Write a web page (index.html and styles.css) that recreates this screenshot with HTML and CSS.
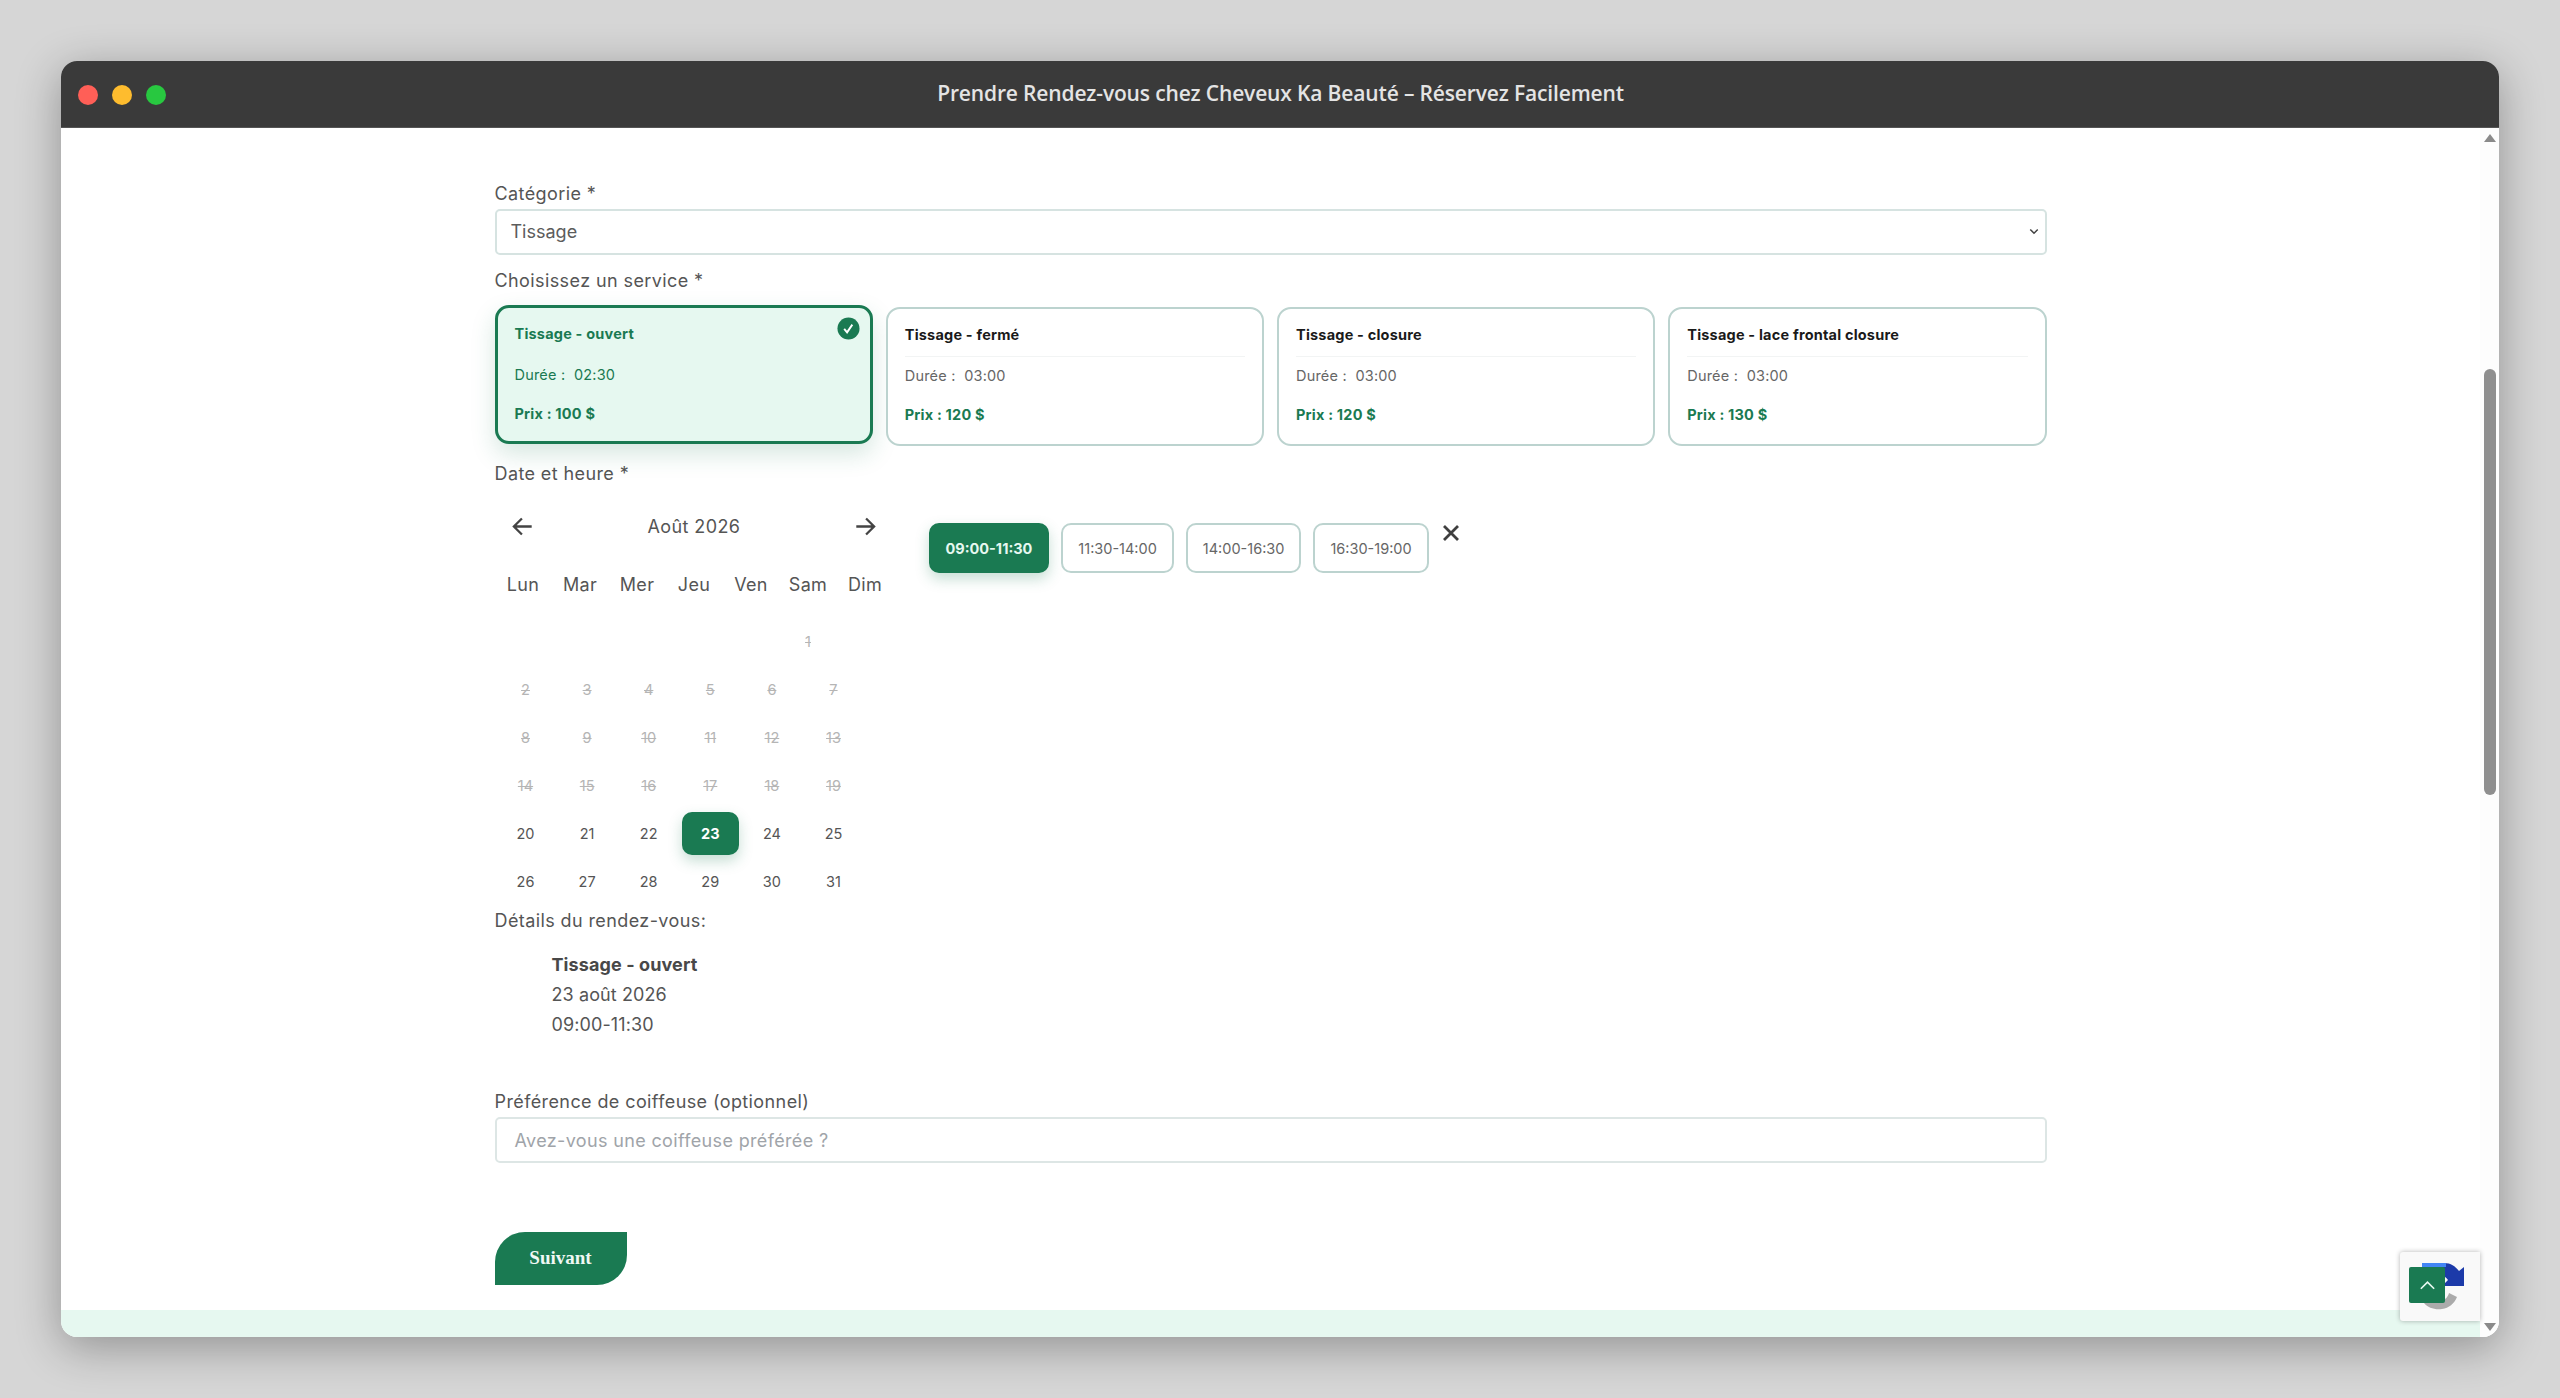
FILE: index.html
```html
<!DOCTYPE html>
<html lang="fr">
<head>
    <meta charset="utf-8" />
    <meta name="viewport" content="width=device-width, initial-scale=1.0" />
    <title>Prendre Rendez-vous chez Cheveux Ka Beauté</title>
    <link rel="stylesheet" href="styles.css">
</head>
<body>
    <div class="window">
        <header class="titlebar">
            <div class="lights">
                <span class="light red"></span>
                <span class="light yellow"></span>
                <span class="light green"></span>
            </div>
            <div class="window-title">Prendre Rendez-vous chez Cheveux Ka Beauté – Réservez Facilement</div>
        </header>

        <div class="viewport">
            <div class="page">
                <main class="booking">
                    <form class="booking-form">
                        <label class="field-label label-category">Catégorie *</label>
                        <div class="select-box">
                            <span>Tissage</span>
                            <svg class="select-caret" viewBox="0 0 12 8" width="10" height="7"><path d="M1.5 1.5 6 6l4.5-4.5" fill="none" stroke="#444" stroke-width="1.8"/></svg>
                        </div>

                        <label class="field-label label-service">Choisissez un service *</label>
                        <div class="service-grid">
                            <div class="service-card selected">
                                <svg class="card-check" viewBox="0 0 24 24" width="23" height="23"><circle cx="12" cy="12" r="11.5" fill="#1a7a52"/><path d="M7.500 12.500l3 3.500 5.500-8" fill="none" stroke="#fff" stroke-width="2"/></svg>
                                <div class="service-name">Tissage - ouvert</div>
                                <div class="service-time">Durée :&nbsp; 02:30</div>
                                <div class="service-price">Prix : 100 $</div>
                            </div>
                            <div class="service-card">
                                <div class="service-name">Tissage - fermé</div>
                                <div class="service-time">Durée :&nbsp; 03:00</div>
                                <div class="service-price">Prix : 120 $</div>
                            </div>
                            <div class="service-card">
                                <div class="service-name">Tissage - closure</div>
                                <div class="service-time">Durée :&nbsp; 03:00</div>
                                <div class="service-price">Prix : 120 $</div>
                            </div>
                            <div class="service-card">
                                <div class="service-name">Tissage - lace frontal closure</div>
                                <div class="service-time">Durée :&nbsp; 03:00</div>
                                <div class="service-price">Prix : 130 $</div>
                            </div>
                        </div>

                        <label class="field-label label-date">Date et heure *</label>
                        <div class="date-time">
                            <div class="calendar">
                                <div class="cal-nav">
                                    <svg viewBox="0 0 20 20" width="23" height="23"><path d="M18 10H2.500M9.500 3 2.500 10l7 7" fill="none" stroke="#444" stroke-width="2"/></svg>
                                    <span class="cal-month">Août 2026</span>
                                    <svg viewBox="0 0 20 20" width="23" height="23"><path d="M2 10h15.500M10.500 3l7 7-7 7" fill="none" stroke="#444" stroke-width="2"/></svg>
                                </div>
                                <div class="cal-weekdays">
                                    <span>Lun</span><span>Mar</span><span>Mer</span><span>Jeu</span><span>Ven</span><span>Sam</span><span>Dim</span>
                                </div>
                                <div class="cal-first">
                                    <span></span><span></span><span></span><span></span><span></span>
                                    <span class="day off">1</span>
                                </div>
                                <div class="cal-week">
                                    <span class="day off">2</span><span class="day off">3</span><span class="day off">4</span><span class="day off">5</span><span class="day off">6</span><span class="day off">7</span>
                                </div>
                                <div class="cal-week">
                                    <span class="day off">8</span><span class="day off">9</span><span class="day off">10</span><span class="day off">11</span><span class="day off">12</span><span class="day off">13</span>
                                </div>
                                <div class="cal-week">
                                    <span class="day off">14</span><span class="day off">15</span><span class="day off">16</span><span class="day off">17</span><span class="day off">18</span><span class="day off">19</span>
                                </div>
                                <div class="cal-week">
                                    <span class="day">20</span><span class="day">21</span><span class="day">22</span><span class="day active">23</span><span class="day">24</span><span class="day">25</span>
                                </div>
                                <div class="cal-week">
                                    <span class="day">26</span><span class="day">27</span><span class="day">28</span><span class="day">29</span><span class="day">30</span><span class="day">31</span>
                                </div>
                            </div>

                            <div class="slots">
                                <div class="slot active">09:00-11:30</div>
                                <div class="slot">11:30-14:00</div>
                                <div class="slot">14:00-16:30</div>
                                <div class="slot">16:30-19:00</div>
                                <svg class="slots-close" viewBox="0 0 18 18" width="18" height="18"><path d="M2 2l14 14M16 2 2 16" fill="none" stroke="#3f3f3f" stroke-width="2.800"/></svg>
                            </div>
                        </div>

                        <label class="field-label label-details">Détails du rendez-vous:</label>
                        <div class="details">
                            <strong>Tissage - ouvert</strong>
                            <div>23 août 2026</div>
                            <div>09:00-11:30</div>
                        </div>

                        <label class="field-label label-pref">Préférence de coiffeuse (optionnel)</label>
                        <div class="text-box">Avez-vous une coiffeuse préférée ?</div>

                        <button type="button" class="next-btn">Suivant</button>
                    </form>
                </main>
                <div class="page-footer"></div>
            </div>

            <div class="scrollbar">
                <svg viewBox="0 0 12 8" width="12" height="8"><path d="M6 0l6 8H0z" fill="#8a8a8a"/></svg>
                <div class="scroll-track"><div class="scroll-thumb"></div></div>
                <svg viewBox="0 0 12 8" width="12" height="8"><path d="M0 0h12L6 8z" fill="#8a8a8a"/></svg>
            </div>

            <div class="recaptcha">
                <svg class="recaptcha-logo" viewBox="0 0 46 50" width="46" height="50">
                    <path d="M16 2h8c7 0 11 3 15 8l5-4v19H22l6-6c-3-4-6-6-12-6z" fill="#1c3aa9"/>
                    <path d="M2 2h24v4H2z" fill="#4285f4"/>
                    <path d="M4 42c4 5 11 7 18 6 7-1 12-5 15-12l-8-4c-1 4-4 7-8 8-4 1-8 1-11-1z" fill="#ababab"/>
                </svg>
            </div>
            <div class="back-top">
                <svg viewBox="0 0 20 12" width="17" height="10"><path d="M2 10.500 10 2.500l8 8" fill="none" stroke="#e6f8f0" stroke-width="2"/></svg>
            </div>
        </div>
    </div>
</body>
</html>
```

FILE: styles.css
```css
* {
    box-sizing: border-box;
}

html, body {
    height: 100%;
}

body {
    margin: 0;
    padding: 61px;
    background: #d6d6d6;
    font-family: 'Inter', 'Liberation Sans', sans-serif;
    color: #4a4a4a;
    overflow: hidden;
}

.window {
    display: flex;
    flex-direction: column;
    height: 1276px;
    border-radius: 16px;
    overflow: hidden;
    background: #fff;
    box-shadow: 0 10px 45px rgba(0,0,0,0.32);
}

.titlebar {
    position: relative;
    flex: 0 0 67px;
    display: flex;
    align-items: center;
    justify-content: center;
    background: #3a3a3a;
    border-bottom: 1px solid #555;
}

.lights {
    position: absolute;
    left: 17px;
    top: 24px;
    display: flex;
    gap: 14px;
}

.light {
    width: 20px;
    height: 20px;
    border-radius: 50%;
}

.light.red { background: #ff5f57; }
.light.yellow { background: #febc2e; }
.light.green { background: #28c840; }

.window-title {
    color: #e4e4e4;
    font-family: 'Open Sans', sans-serif;
    font-size: 21px;
    font-weight: 600;
    letter-spacing: -0.15px;
    margin-top: -3px;
    margin-left: 1px;
}

.viewport {
    position: relative;
    flex: 1;
    display: flex;
    min-height: 0;
}

.page {
    flex: 1;
    display: flex;
    flex-direction: column;
}

.booking {
    flex: 1;
    display: flex;
    justify-content: center;
}

.booking-form {
    width: 1552px;
    padding-top: 53px;
}

.field-label {
    display: block;
    font-size: 18px;
    line-height: 26px;
    letter-spacing: 0.4px;
    color: #555;
}

.label-service { margin-top: 13px; }
.label-date { margin-top: 15px; }
.label-details { margin-top: 5px; }
.label-pref { margin-top: 49px; }

.select-box {
    display: flex;
    align-items: center;
    justify-content: space-between;
    height: 46px;
    margin-top: 2px;
    padding: 0 6px 1px 14px;
    border: 2px solid #d6e3e1;
    border-radius: 5px;
    font-size: 18px;
    color: #5c5c5c;
}

.service-grid {
    display: grid;
    grid-template-columns: repeat(4, 1fr);
    gap: 13px;
    margin-top: 13px;
}

.service-card {
    position: relative;
    height: 139px;
    padding: 16px 17px 0;
    background: #fff;
    border: 2px solid #bcd3cf;
    border-radius: 14px;
    font-size: 14.5px;
    letter-spacing: 0.2px;
}

.service-card.selected {
    transform: translateY(-2px);
    background: #e6f8f0;
    border: 3px solid #1a7a52;
    color: #1a7a52;
    box-shadow: 0 10px 24px rgba(26,122,82,0.18);
}

.service-name {
    height: 32px;
    line-height: 20px;
    font-weight: 700;
    color: #1a1a1a;
    border-bottom: 1px solid #f2f4f4;
}

.service-time {
    margin-top: 9px;
    line-height: 20px;
    color: #666;
}

.service-price {
    margin-top: 19px;
    line-height: 20px;
    font-weight: 700;
    color: #1a7a52;
}

.selected .service-name,
.selected .service-time,
.selected .service-price {
    color: #1a7a52;
    border-color: transparent;
}

.card-check {
    position: absolute;
    top: 9px;
    right: 10px;
}

.date-time {
    display: flex;
    margin-top: 11px;
}

.calendar {
    flex: 0 0 434px;
    padding-top: 8px;
}

.cal-nav {
    display: flex;
    align-items: center;
    justify-content: space-between;
    width: 367px;
    height: 40px;
    margin-left: 16px;
}

.cal-month {
    font-size: 18px;
    letter-spacing: 0.4px;
    color: #555;
}

.cal-weekdays,
.cal-first {
    display: grid;
    grid-template-columns: repeat(7, 57px);
}

.cal-weekdays {
    margin-top: 26px;
    height: 26px;
    line-height: 26px;
    text-align: center;
    font-size: 18px;
    letter-spacing: 0.3px;
    color: #555;
}

.cal-first {
    height: 43px;
    margin-top: 22px;
    grid-template-columns: repeat(6, 57px);
}

.cal-week {
    display: grid;
    grid-template-columns: repeat(6, 57px);
    column-gap: 4.6px;
    height: 43px;
    margin-top: 5px;
    margin-left: 2.500px;
}

.day {
    display: flex;
    align-items: center;
    justify-content: center;
    height: 43px;
    font-size: 14.5px;
    color: #555;
    border-radius: 10px;
}

.day.off {
    color: #b5b5b5;
    text-decoration: line-through;
}

.day.active {
    background: #1a7a52;
    color: #fff;
    font-weight: 700;
    box-shadow: 0 6px 14px rgba(26,122,82,0.25);
}

.slots {
    display: flex;
    align-items: flex-start;
    gap: 12px;
    margin-top: 25px;
}

.slot {
    display: flex;
    align-items: center;
    justify-content: center;
    height: 50px;
    padding: 0 15px;
    border: 2px solid #bcd3cf;
    border-radius: 10px;
    font-size: 14.5px;
    color: #666;
}

.slot.active {
    background: #1a7a52;
    border-color: #1a7a52;
    color: #e6f8f0;
    font-weight: 700;
    box-shadow: 0 6px 14px rgba(26,122,82,0.25);
}

.slots-close {
    margin-top: 1px;
    margin-left: 1px;
}

.details {
    margin-top: 16px;
    padding-left: 57px;
    font-size: 18px;
    line-height: 30px;
    letter-spacing: 0.1px;
    color: #555;
}

.details strong {
    display: block;
    color: #484848;
}

.text-box {
    display: flex;
    align-items: center;
    height: 46px;
    margin-top: 2px;
    padding: 0 18px;
    border: 2px solid #dde6e5;
    border-radius: 5px;
    font-size: 18px;
    letter-spacing: 0.35px;
    color: #a0a4a9;
}

.next-btn {
    display: block;
    width: 132px;
    height: 53px;
    margin-top: 69px;
    padding: 0 0 2px;
    border: none;
    border-radius: 30px 0 30px 0;
    background: #1a7a52;
    color: #f0f8f4;
    font-family: 'Liberation Serif', serif;
    font-size: 19px;
    font-weight: 700;
}

.page-footer {
    flex: 0 0 27px;
    background: #e6f8f0;
}

.scrollbar {
    flex: 0 0 19px;
    display: flex;
    flex-direction: column;
    align-items: center;
    padding: 6px 0;
    background: #fdfdfd;
}

.scroll-track {
    flex: 1;
    width: 100%;
}

.scroll-thumb {
    width: 12px;
    height: 426px;
    margin: 227px auto 0;
    background: #8f8f8f;
    border-radius: 6px;
}

.recaptcha {
    position: absolute;
    left: 2339px;
    top: 1124px;
    width: 80px;
    height: 69px;
    padding: 9px 0 0 20px;
    background: #f9f9f9;
    border-radius: 3px 0 0 3px;
    box-shadow: 0 0 5px rgba(0,0,0,0.3);
}

.back-top {
    position: absolute;
    left: 2348px;
    top: 1139px;
    width: 36px;
    height: 36px;
    display: flex;
    align-items: center;
    justify-content: center;
    background: #1a7a52;
    border-radius: 2px;
}
```
